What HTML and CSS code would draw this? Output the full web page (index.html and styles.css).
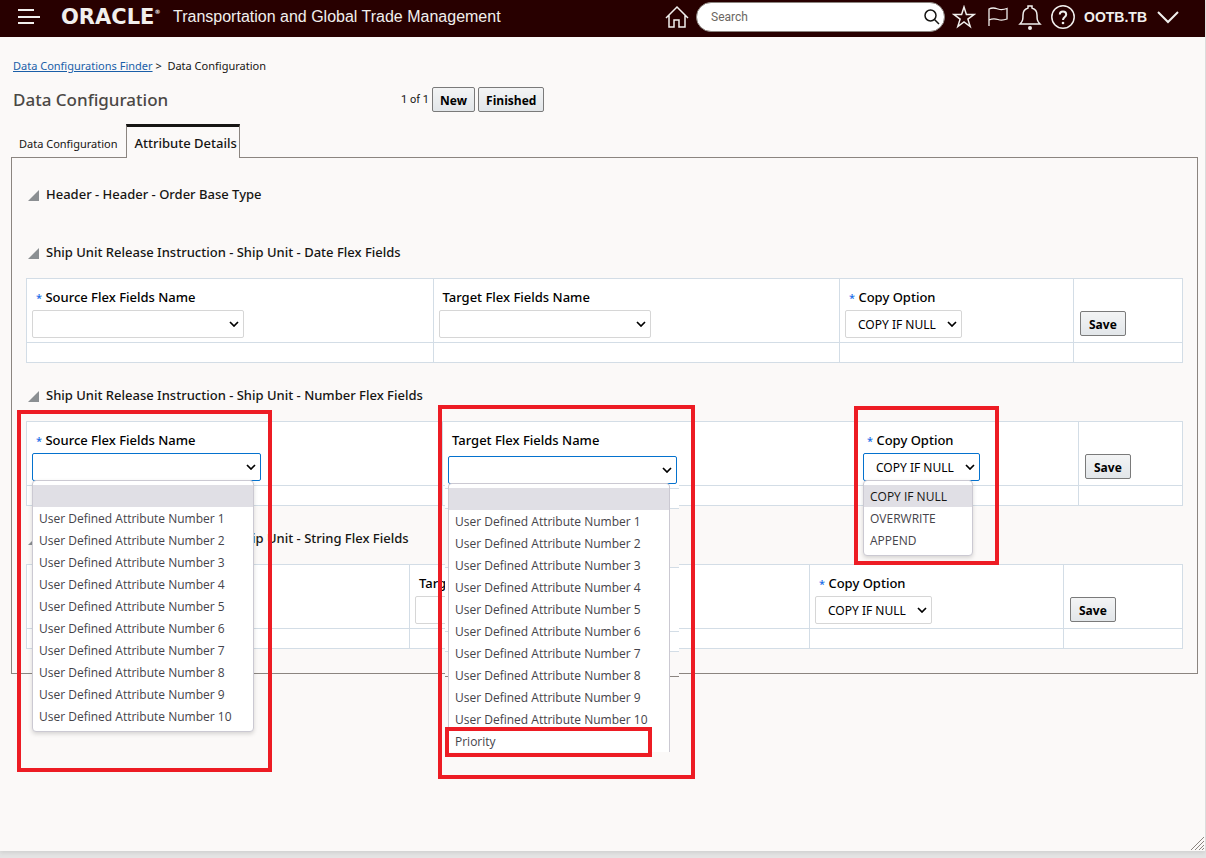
FILE: index.html
```html
<!DOCTYPE html>
<html lang="en">
<head>
  <meta charset="UTF-8" />
  <meta name="viewport" content="width=device-width, initial-scale=1.0"/>
  <title>Data Configuration</title>
  <link rel="stylesheet" href="styles.css">
</head>
<body>
  <div class="page">

    <header class="topbar">
      <button class="icon-btn" aria-label="Menu">
        <svg width="24" height="24" viewBox="0 0 24 24"><path d="M1 5h16M1 12h22M1 18h16" stroke-width="2"/></svg>
      </button>
      <span class="logo">ORACLE<sup>®</sup></span>
      <span class="app-name">Transportation and Global Trade Management</span>

      <div class="tools">
        <button class="icon-btn" aria-label="Home">
          <svg width="24" height="24" viewBox="0 0 24 24"><path d="M1 13 12 2l11 11M4 10.500V22h5v-7h5v7h6V10.500" stroke-width="1.500"/></svg>
        </button>
        <form class="search">
          <input type="text" placeholder="Search" aria-label="Search">
          <button class="search-btn" type="button" aria-label="Go">
            <svg width="16" height="16" viewBox="0 0 16 16"><circle cx="6.500" cy="6.500" r="5.500"/><path d="M10.500 10.500 15 15"/></svg>
          </button>
        </form>
        <button class="icon-btn" aria-label="Favorites">
          <svg width="24" height="24" viewBox="0 0 24 24"><path d="m12 2 2.400 7.500H22l-6.100 4.600 2.300 7.400L12 17l-6.200 4.500 2.300-7.400L2 9.500h7.600z" stroke-width="1.500"/></svg>
        </button>
        <button class="icon-btn" aria-label="Flag">
          <svg width="24" height="24" viewBox="0 0 24 24"><path d="M4 21V4c4-2 6-1 9 0s5 1 9-.500V14c-4 1.500-6 1.500-9 .500s-5-1.500-9 .500" stroke-width="1.300"/></svg>
        </button>
        <button class="icon-btn" aria-label="Notifications">
          <svg width="24" height="26" viewBox="0 0 24 26"><path d="M2 20c3-3 3-5 3-9 0-4 2-6 5-7V2h4v2c3 1 5 3 5 7 0 4 0 6 3 9z" stroke-width="1.500"/><circle class="dot" cx="12" cy="24" r="2"/></svg>
        </button>
        <button class="icon-btn" aria-label="Help">
          <svg width="24" height="24" viewBox="0 0 24 24"><circle cx="12" cy="12" r="11.200" stroke-width="1.500"/><path d="M8.800 9.500c0-4 6.400-4 6.400 0 0 2.500-3.200 2.500-3.200 5.500" stroke-width="2"/><circle class="dot" cx="12" cy="18" r="1.300"/></svg>
        </button>
        <button class="user">OOTB.TB
          <svg width="24" height="24" viewBox="0 0 24 24"><path d="m2 7 10 10L22 7" stroke-width="2"/></svg>
        </button>
      </div>
    </header>

    <main>
      <nav class="breadcrumb">
        <a href="#">Data Configurations Finder</a> &gt;&nbsp; Data Configuration
      </nav>

      <div class="title-row">
        <h1>Data Configuration</h1>
        <span class="count">1 of 1</span>
        <button class="btn">New</button>
        <button class="btn">Finished</button>
      </div>

      <div class="tabs">
        <a class="tab" href="#">Data Configuration</a>
        <a class="tab active" href="#">Attribute Details</a>
      </div>

      <div class="panel">
        <section class="empty">
          <h2>Header - Header - Order Base Type</h2>
        </section>

        <section>
          <h2>Ship Unit Release Instruction - Ship Unit - Date Flex Fields</h2>
          <table class="grid date-grid">
            <colgroup><col class="source"><col class="target"><col class="option"><col class="action"></colgroup>
            <tr>
              <td>
                <div class="field">
                  <label for="dateSource"><span class="req">*</span> Source Flex Fields Name</label>
                  <select id="dateSource"><option></option></select>
                </div>
              </td>
              <td>
                <div class="field">
                  <label for="dateTarget">Target Flex Fields Name</label>
                  <select id="dateTarget"><option></option></select>
                </div>
              </td>
              <td>
                <div class="field">
                  <label for="dateOption"><span class="req">*</span> Copy Option</label>
                  <select id="dateOption" class="short"><option>COPY IF NULL</option><option>OVERWRITE</option><option>APPEND</option></select>
                </div>
              </td>
              <td class="save"><button class="btn">Save</button></td>
            </tr>
            <tr class="blank"><td></td><td></td><td></td><td></td></tr>
          </table>
        </section>

        <section>
          <h2>Ship Unit Release Instruction - Ship Unit - Number Flex Fields</h2>
          <table class="grid number-grid">
            <colgroup><col class="source"><col class="target"><col class="option"><col class="action"></colgroup>
            <tr>
              <td>
                <div class="field">
                  <label for="numberSource"><span class="req">*</span> Source Flex Fields Name</label>
                  <select id="numberSource" class="open"><option></option></select>
                  <ul class="menu">
                    <li class="selected"></li>
                    <li>User Defined Attribute Number 1</li>
                    <li>User Defined Attribute Number 2</li>
                    <li>User Defined Attribute Number 3</li>
                    <li>User Defined Attribute Number 4</li>
                    <li>User Defined Attribute Number 5</li>
                    <li>User Defined Attribute Number 6</li>
                    <li>User Defined Attribute Number 7</li>
                    <li>User Defined Attribute Number 8</li>
                    <li>User Defined Attribute Number 9</li>
                    <li>User Defined Attribute Number 10</li>
                  </ul>
                  <div class="mark mark-source"></div>
                </div>
              </td>
              <td>
                <div class="field lowered">
                  <label for="numberTarget">Target Flex Fields Name</label>
                  <select id="numberTarget" class="open"><option></option></select>
                  <div class="backdrop"></div>
                  <ul class="menu cut">
                    <li class="selected"></li>
                    <li>User Defined Attribute Number 1</li>
                    <li>User Defined Attribute Number 2</li>
                    <li>User Defined Attribute Number 3</li>
                    <li>User Defined Attribute Number 4</li>
                    <li>User Defined Attribute Number 5</li>
                    <li>User Defined Attribute Number 6</li>
                    <li>User Defined Attribute Number 7</li>
                    <li>User Defined Attribute Number 8</li>
                    <li>User Defined Attribute Number 9</li>
                    <li>User Defined Attribute Number 10</li>
                    <li>Priority</li>
                  </ul>
                  <div class="mark mark-target"></div>
                  <div class="mark mark-priority"></div>
                </div>
              </td>
              <td>
                <div class="field">
                  <label for="numberOption"><span class="req">*</span> Copy Option</label>
                  <select id="numberOption" class="short open"><option>COPY IF NULL</option><option>OVERWRITE</option><option>APPEND</option></select>
                  <ul class="menu small">
                    <li class="selected">COPY IF NULL</li>
                    <li>OVERWRITE</li>
                    <li>APPEND</li>
                  </ul>
                  <div class="mark mark-option"></div>
                </div>
              </td>
              <td class="save"><button class="btn">Save</button></td>
            </tr>
            <tr class="blank"><td></td><td></td><td></td><td></td></tr>
          </table>
        </section>

        <section>
          <h2>Ship Unit Release Instruction - Ship Unit - String Flex Fields</h2>
          <table class="grid string-grid">
            <colgroup><col class="source"><col class="target"><col class="option"><col class="action"></colgroup>
            <tr>
              <td>
                <div class="field">
                  <label for="stringSource"><span class="req">*</span> Source Flex Fields Name</label>
                  <select id="stringSource"><option></option></select>
                </div>
              </td>
              <td>
                <div class="field">
                  <label for="stringTarget">Target Flex Fields Name</label>
                  <select id="stringTarget"><option></option></select>
                </div>
              </td>
              <td>
                <div class="field">
                  <label for="stringOption"><span class="req">*</span> Copy Option</label>
                  <select id="stringOption" class="short"><option>COPY IF NULL</option><option>OVERWRITE</option><option>APPEND</option></select>
                </div>
              </td>
              <td class="save"><button class="btn">Save</button></td>
            </tr>
            <tr class="blank"><td></td><td></td><td></td><td></td></tr>
          </table>
        </section>
      </div>
    </main>

    <svg class="grip" width="13" height="13" viewBox="0 0 13 13"><path d="M0 13 13 0M4 13l9-9M8 13l5-5M11 13l2-2"/></svg>
  </div>
</body>
</html>
```

FILE: styles.css
```css
body {
  margin: 0;
  font-family: "Noto Sans", sans-serif;
  font-size: 12px;
  color: #161513;
  background-color: #e4e4e4;
}

button, input, select {
  font-family: inherit;
}

.page {
  position: relative;
  min-height: calc(100vh - 7px);
  margin: 0 1px 7px 0;
  background-color: #fbf9f8;
  box-shadow: 0 2px 4px #d0d0d0;
}

/* top bar */
.topbar {
  display: flex;
  align-items: center;
  height: 37px;
  padding: 0 25px 4px 17px;
  box-sizing: border-box;
  background-color: #280000;
  color: #f1efed;
}

.icon-btn {
  display: flex;
  padding: 0;
  border: none;
  background: none;
}

.topbar svg {
  fill: none;
  stroke: #f1efed;
}

.topbar .dot {
  fill: #f1efed;
  stroke: none;
}

.logo {
  width: 112px;
  margin-left: 20px;
  font-family: "DejaVu Sans", sans-serif;
  font-size: 21px;
  font-weight: bold;
  line-height: 24px;
}

.logo sup {
  font-size: 6px;
  line-height: 0;
  vertical-align: 10px;
}

.app-name {
  font-family: "Liberation Sans", sans-serif;
  font-size: 16px;
}

.tools {
  display: flex;
  align-items: center;
  gap: 9px;
  margin-left: auto;
}

.search {
  position: relative;
  width: 249px;
  margin: 0 -2px;
}

.search input {
  display: block;
  width: 100%;
  height: 30px;
  box-sizing: border-box;
  padding: 0 34px 0 14px;
  border: 1px solid #8b8580;
  border-radius: 15px;
  background-color: white;
  font-family: Roboto, sans-serif;
  font-size: 12px;
}

.search input::placeholder {
  color: #6b6661;
}

.search-btn {
  position: absolute;
  top: 7px;
  right: 5px;
  display: flex;
  padding: 0;
  border: none;
  background: none;
}

.search-btn svg {
  stroke: #161513;
  stroke-width: 1.5;
}

.user {
  display: flex;
  align-items: center;
  gap: 9px;
  padding: 0;
  border: none;
  background: none;
  color: #f1efed;
  font-family: "Liberation Sans", sans-serif;
  font-size: 14px;
  font-weight: bold;
}

/* title and tabs */
main {
  padding: 20px 7px 24px 11px;
}

.breadcrumb {
  padding-left: 2px;
  font-size: 11px;
  line-height: 18px;
}

.breadcrumb a {
  color: #1a5fa8;
}

.title-row {
  display: flex;
  align-items: center;
  gap: 3px;
  margin-top: 12px;
  padding-left: 2px;
}

h1 {
  width: 385px;
  margin: 0;
  color: #4b4845;
  font-size: 17px;
  font-weight: 500;
  line-height: 24px;
}

.count {
  font-family: Roboto, sans-serif;
  font-size: 11px;
}

.btn {
  height: 25px;
  padding: 1px 7px 0;
  border: 1px solid #7a7a7a;
  border-radius: 2px;
  background: linear-gradient(#f3f4f5, #e2e6e9);
  color: black;
  font-family: "Open Sans", sans-serif;
  font-size: 12px;
  font-weight: bold;
}

.tabs {
  display: flex;
  margin-top: 12px;
}

.tab {
  padding: 12px 8px 0;
  color: #161513;
  font-size: 11px;
  line-height: 16px;
  text-decoration: none;
}

.tab.active {
  position: relative;
  margin-bottom: -1px;
  padding: 8px 2px 7px 8px;
  border: 1px solid #8b8580;
  border-top: 3px solid #161513;
  border-bottom: none;
  background-color: #fbf9f8;
  font-size: 13px;
  font-weight: 500;
}

.panel {
  padding: 26px 14px 24px;
  border: 1px solid #8b8580;
}

/* sections */
section {
  margin-bottom: 22px;
}

section:last-child {
  margin-bottom: 0;
}

.empty {
  margin-bottom: 38px;
}

h2 {
  display: flex;
  align-items: center;
  gap: 7px;
  margin: 0 0 16px;
  padding-left: 2px;
  font-size: 13px;
  font-weight: 500;
  line-height: 20px;
}

h2::before {
  content: "";
  width: 11px;
  height: 11px;
  margin-top: 3px;
  background-color: #8b8f92;
  clip-path: polygon(100% 0, 100% 100%, 0 100%);
}

.grid {
  width: 100%;
  height: 85px;
  table-layout: fixed;
  border-collapse: collapse;
  background-color: white;
}

.grid td {
  padding: 8px 5px 4px;
  border: 1px solid #d3dde6;
  vertical-align: top;
}

.grid .blank td {
  height: 19px;
  padding: 0;
}

.grid .save {
  padding: 0 6px 6px;
  vertical-align: bottom;
}

.save .btn {
  display: block;
  padding: 1px 8px 0;
}

.date-grid .option { width: 234px; }
.date-grid .action { width: 109px; }

.number-grid .target { width: 415px; }
.number-grid .option { width: 221px; }
.number-grid .action { width: 104px; }

.string-grid .target { width: 400px; }
.string-grid .option { width: 254px; }
.string-grid .action { width: 119px; }

.field {
  position: relative;
}

label {
  display: block;
  margin-bottom: 3px;
  padding-left: 4px;
  color: black;
  font-size: 13px;
  font-weight: 500;
  line-height: 20px;
}

.req {
  color: #1a6fe8;
  font-size: 11px;
  line-height: 0;
}

select {
  display: block;
  width: 212px;
  height: 28px;
  padding: 0 20px 0 12px;
  border: 1px solid #d6d6d6;
  border-radius: 2px;
  appearance: none;
  color: black;
  background: white url("data:image/svg+xml,%3Csvg xmlns='http://www.w3.org/2000/svg' width='10' height='6'%3E%3Cpath d='M1 1l4 4 4-4' fill='none' stroke='black' stroke-width='1.700'/%3E%3C/svg%3E") no-repeat right 4px center;
  font-size: 12px;
}

select.open {
  width: 229px;
  border-color: #0572ce;
}

select.short {
  width: 117px;
}

/* open drop-down lists */
.menu {
  position: absolute;
  z-index: 2;
  top: 50px;
  left: 0;
  width: 222px;
  box-sizing: border-box;
  margin: 0;
  padding: 4px 0;
  border: 1px solid #cbc9d2;
  border-radius: 4px;
  background-color: white;
  box-shadow: 0 2px 4px rgba(0,0,0,0.15);
  color: #45434a;
  font-family: "Open Sans", sans-serif;
  list-style: none;
}

.menu li {
  height: 22px;
  padding-left: 6px;
  line-height: 23px;
}

.menu .selected {
  background-color: #e0dfe5;
  color: #161513;
}

.menu.small {
  width: 110px;
}

/* label sits further from its select without making the row taller */
.lowered {
  margin-bottom: -3px;
}

.lowered label {
  margin-bottom: 6px;
}

.lowered .menu {
  top: 53px;
}

.menu.cut {
  padding-bottom: 0;
  border-bottom: none;
  border-radius: 4px 4px 0 0;
  box-shadow: none;
}

/* rules showing behind the target list */
.backdrop {
  position: absolute;
  z-index: 1;
  top: 54px;
  left: -3px;
  width: 234px;
  height: 268px;
  background: linear-gradient(
    white 4px, #d3dde6 4px 5px, white 5px 24px, #d3dde6 24px 25px,
    #fbf9f8 25px 83px, #d3dde6 83px 84px, white 84px 147px, #d3dde6 147px 148px,
    white 148px 167px, #d3dde6 167px 168px, #fbf9f8 168px 192px, #8b8580 192px 193px, #fbf9f8 193px);
}

/* red highlight boxes */
.mark {
  position: absolute;
  z-index: 3;
  box-sizing: border-box;
  border: 4px solid #ed1c24;
}

.mark-source {
  top: -20px;
  left: -15px;
  width: 255px;
  height: 362px;
}

.mark-target {
  top: -25px;
  left: -10px;
  width: 257px;
  height: 374px;
}

.mark-priority {
  top: 297px;
  left: -3px;
  width: 207px;
  height: 30px;
}

.mark-option {
  top: -24px;
  left: -9px;
  width: 145px;
  height: 159px;
}

.grip {
  position: absolute;
  right: 1px;
  bottom: 1px;
  stroke: #8b8580;
}
```
